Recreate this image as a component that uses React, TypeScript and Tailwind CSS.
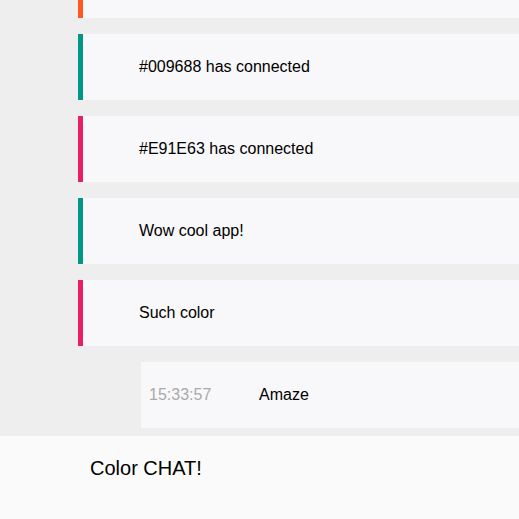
const messages = [
  { color: 'border-[#FF5722]', text: 'earlier message' },
  { color: 'border-[#009688]', text: '#009688 has connected' },
  { color: 'border-[#E91E63]', text: '#E91E63 has connected' },
  { color: 'border-[#009688]', text: 'Wow cool app!' },
  { color: 'border-[#E91E63]', text: 'Such color' },
];

export default function App() {
  return (
    <div className="flex h-[519px] w-[519px] flex-col bg-[#eeeeee] font-['Liberation_Sans',Arial,sans-serif] text-black">
      {/* Message list, newest at the bottom */}
      <div className="flex h-[436px] flex-col justify-end gap-4 overflow-hidden pb-2">
        {messages.map((m, i) => (
          <div
            key={i}
            className={`ml-[78px] flex h-[66px] shrink-0 items-center border-l-[5px] bg-[#f8f7f9] pl-14 text-base ${m.color}`}
          >
            {i === 0 ? <span className="invisible">{m.text}</span> : m.text}
          </div>
        ))}
        <div className="ml-[141px] flex h-[66px] shrink-0 items-center bg-[#f8f7f9] pl-2 text-base">
          <span className="w-[110px] text-[#aaaaaa]">15:33:57</span>
          <span>Amaze</span>
        </div>
      </div>

      {/* Footer */}
      <div className="flex-1 bg-[#fafafa] pl-[90px] pt-[18px] text-xl">Color CHAT!</div>
    </div>
  );
}
